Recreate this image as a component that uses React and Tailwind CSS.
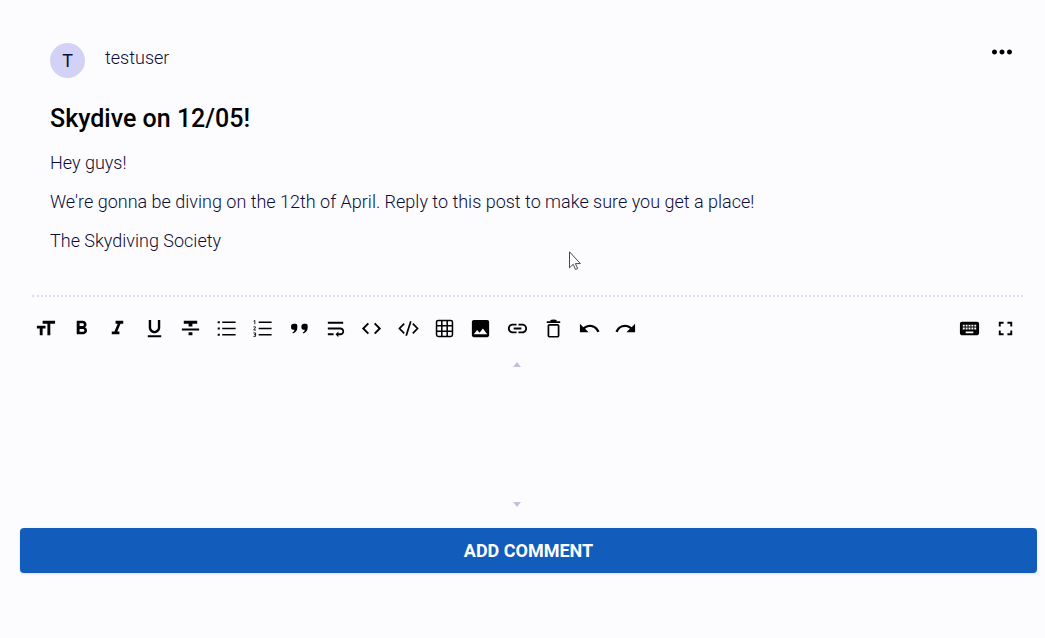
import React from 'react';
import {
  MdFormatSize, MdFormatBold, MdFormatItalic, MdFormatUnderlined, MdFormatStrikethrough,
  MdWrapText, MdCode,
  MdImage, MdInsertLink, MdUndo, MdRedo, MdKeyboard, MdFullscreen, MdMoreHoriz,
} from 'react-icons/md';

function BulletListIcon(props) {
  return (
    <svg viewBox="0 0 24 24" fill="none" stroke="currentColor" strokeWidth="1.7" {...props}>
      <path d="M7.5 5.5H21.5M7.5 12H21.5M7.5 18.5H21.5" />
      <path d="M2.8 5.5h2.2M2.8 12h2.2M2.8 18.5h2.2" strokeWidth="2.2" />
    </svg>
  );
}

function NumberListIcon(props) {
  return (
    <svg viewBox="0 0 24 24" fill="none" stroke="currentColor" strokeWidth="1.7" {...props}>
      <path d="M8 5.5H21.5M8 12H21.5M8 18.5H21.5" />
      <path d="M2.8 4.3 4 3.6v4M2.5 10.3h2.3v.5L2.8 13.6h2.4M2.5 16.6h2.3v3.6H2.5M3.2 18.4h1.6" strokeWidth="0.9" />
    </svg>
  );
}

function QuoteIcon(props) {
  return (
    <svg viewBox="0 0 24 24" fill="currentColor" {...props}>
      <path d="M3.2 9.9A2.9 2.9 0 0 1 6.1 7h1.7A1.9 1.9 0 0 1 9.7 8.9v2.4c0 3-1.6 5.1-4.6 5.9l-.5-1.1c1.3-.6 2-1.5 2-2.9H5.3a2.1 2.1 0 0 1-2.1-2.1z" />
      <path d="M14 9.9A2.9 2.9 0 0 1 16.9 7h1.7a1.9 1.9 0 0 1 1.9 1.9v2.4c0 3-1.6 5.1-4.6 5.9l-.5-1.1c1.3-.6 2-1.5 2-2.9h-1.3a2.1 2.1 0 0 1-2.1-2.1z" />
    </svg>
  );
}

function CodeBlockIcon(props) {
  return (
    <svg viewBox="0 0 24 24" fill="none" stroke="currentColor" strokeWidth="1.8" {...props}>
      <path d="M7.5 7 2.6 12l4.9 5M16.5 7l4.9 5-4.9 5M14.4 4.5 9.6 19.5" />
    </svg>
  );
}

function TableIcon(props) {
  return (
    <svg viewBox="0 0 24 24" fill="none" stroke="currentColor" strokeWidth="1.6" {...props}>
      <rect x="3.7" y="3.7" width="16.6" height="16.6" rx="1.8" />
      <path d="M9.2 3.7v16.6M14.8 3.7v16.6M3.7 9.2h16.6M3.7 14.8h16.6" />
    </svg>
  );
}

function TrashIcon(props) {
  return (
    <svg viewBox="0 0 24 24" fill="none" stroke="currentColor" strokeWidth="1.8" {...props}>
      <path d="M5 5.3h14M9 4.2c1.2-.9 4.8-.9 6 0" />
      <rect x="6.7" y="8.2" width="10.6" height="12.4" rx="1" />
    </svg>
  );
}

const tools = [
  ['Header', MdFormatSize],
  ['Bold', MdFormatBold],
  ['Italic', MdFormatItalic],
  ['Underline', MdFormatUnderlined],
  ['Strikethrough', MdFormatStrikethrough],
  ['Unordered list', BulletListIcon],
  ['Ordered list', NumberListIcon],
  ['Quote', QuoteIcon],
  ['Line break', MdWrapText],
  ['Inline code', MdCode],
  ['Code block', CodeBlockIcon],
  ['Table', TableIcon],
  ['Image', MdImage],
  ['Link', MdInsertLink],
  ['Clear', TrashIcon],
  ['Undo', MdUndo],
  ['Redo', MdRedo],
];

function ToolButton({ label, Icon }) {
  return (
    <button type="button" aria-label={label} className="flex h-9 min-w-0 flex-1 items-center justify-center">
      <Icon className="size-[23px] shrink-0" />
    </button>
  );
}

export default function App() {
  return (
    <div className="relative min-h-screen bg-[#fcfcff] pt-10 font-['Roboto',sans-serif] text-[#0c0c36]">
      <article className="pr-7 pl-[50px]">
        <header className="flex items-start">
          <div className="mt-[3px] flex size-[35px] items-center justify-center rounded-full bg-[#d2d2f7] text-lg">T</div>
          <span className="ml-5 pt-1 text-lg font-[350]">testuser</span>
          <button type="button" aria-label="More options" className="-mt-[3px] ml-auto text-black">
            <MdMoreHoriz className="size-[30px]" />
          </button>
        </header>
        <h1 className="mt-[25px] text-[25px] leading-8 font-medium text-black">Skydive on 12/05!</h1>
        <div className="mt-[14px] flex flex-col gap-3 text-lg leading-[27px] font-[350]">
          <p>Hey guys!</p>
          <p>We&apos;re gonna be diving on the 12th of April. Reply to this post to make sure you get a place!</p>
          <p>The Skydiving Society</p>
        </div>
      </article>

      <hr className="mt-[41px] mr-[22px] ml-8 border-t-2 border-dotted border-[#dcdcfa]" />

      <div className="mt-[13px] flex justify-between pr-[21px] pl-[27px] text-black">
        <div className="flex w-[617px]">
          {tools.map(([label, Icon]) => (
            <ToolButton key={label} label={label} Icon={Icon} />
          ))}
        </div>
        <div className="flex w-[73px]">
          <ToolButton label="Toggle keyboard" Icon={MdKeyboard} />
          <ToolButton label="Full screen" Icon={MdFullscreen} />
        </div>
      </div>

      <div className="mt-4 mr-8 ml-5 flex flex-col items-center text-[#c4c0dc]">
        <svg viewBox="0 0 8 5" className="h-[5px] w-2" fill="currentColor" aria-hidden="true"><path d="M4 0 8 5H0z" /></svg>
        <textarea aria-label="Comment" className="h-[135px] w-full resize-none bg-transparent px-4 text-base text-[#0c0c36] outline-none" />
        <svg viewBox="0 0 8 5" className="h-[5px] w-2" fill="currentColor" aria-hidden="true"><path d="M0 0h8L4 5z" /></svg>
      </div>

      <div className="mt-[21px] pr-2 pl-5">
        <button type="button" className="h-[45px] w-full rounded bg-[#125cbc] text-lg font-bold text-white uppercase shadow-sm">
          Add comment
        </button>
      </div>

      <svg viewBox="0 0 12 19" className="absolute top-[251px] left-[569px] h-[19px] w-3" fill="#fff" stroke="#333" strokeWidth="0.9" aria-hidden="true">
        <path d="M.5.8v16l3.7-3.5 2.4 5.2 2.1-1-2.3-4.9h5z" />
      </svg>
    </div>
  );
}
